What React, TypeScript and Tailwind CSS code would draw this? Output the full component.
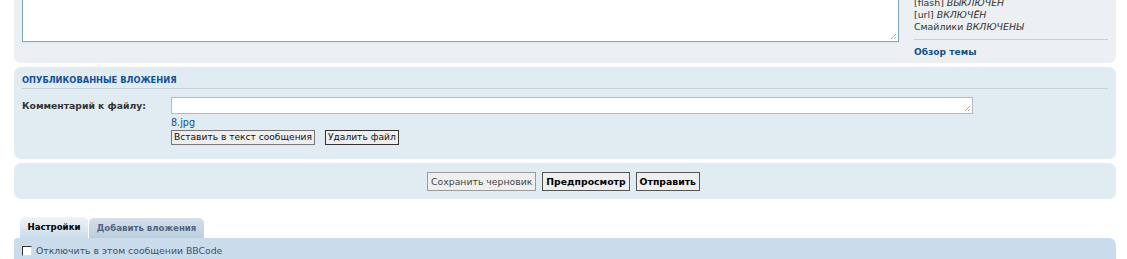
import React from "react";

export default function App() {
  return (
    <div className="w-[1127px] h-[259px] overflow-hidden bg-white font-['DejaVu_Sans',sans-serif] text-[10px] text-[#333333]">
      {/* top panel (cropped) */}
      <div className="ml-[14px] mr-[11px] -mt-[40px] h-[103px] rounded-[7px] bg-[#ECF0F3] px-[8px] pt-[10px] flex items-start">
        <div className="relative w-[877px] h-[72px] border border-[#7FA9C4] bg-white shadow-[0_1px_2px_#D4EAF6]">
          <svg className="absolute right-[1px] bottom-[1px]" width="8" height="8" viewBox="0 0 8 8">
            <path d="M7 2 L2 7 M7 5 L5 7" stroke="#A9A9A9" strokeWidth="1" />
          </svg>
        </div>
        <div className="ml-[15px] flex-1 mt-[3px] flex flex-col text-[9.4px]">
          <div className="leading-[12px] whitespace-nowrap">BBCode <i>ВКЛЮЧЁН</i></div>
          <div className="leading-[12px] whitespace-nowrap">[img] <i>ВКЛЮЧЕН</i></div>
          <div className="leading-[12px] whitespace-nowrap">[flash] <i>ВЫКЛЮЧЕН</i></div>
          <div className="leading-[12px] whitespace-nowrap">[url] <i>ВКЛЮЧЁН</i></div>
          <div className="leading-[12px] whitespace-nowrap pb-[6px] border-b border-[#CCCCCC]">Смайлики <i>ВКЛЮЧЕНЫ</i></div>
          <div className="leading-[12px] mt-[6px] font-bold text-[#105289] text-[9.1px]">Обзор темы</div>
        </div>
      </div>

      {/* attachments panel */}
      <div className="ml-[14px] mr-[11px] mt-[4px] h-[92px] rounded-[7px] bg-[#E1EBF2] px-[8px] pt-[8px]">
        <div className="text-[8.3px] leading-[11px] pb-[2px] font-bold uppercase text-[#115098] border-b border-[#C6D3DC]">
          Опубликованные вложения
        </div>
        <div className="flex mt-[8px]">
          <div className="w-[149px] pt-[2px] font-bold text-[#333333] leading-[13px] text-[9.25px]">Комментарий к файлу:</div>
          <div className="flex flex-col">
            <div className="relative w-[802px] h-[17px] border border-[#B4BAC0] bg-white">
              <svg className="absolute right-[1px] bottom-[1px]" width="8" height="8" viewBox="0 0 8 8">
                <path d="M7 2 L2 7 M7 5 L5 7" stroke="#A9A9A9" strokeWidth="1" />
              </svg>
            </div>
            <div className="mt-[3px] leading-[12px] text-[#105289] text-[9.6px]">8.jpg</div>
            <div className="flex gap-[10px] mt-[1px]">
              <button className="h-[15px] px-[2px] leading-[11px] border border-[#777777] bg-[#EEEEEE] text-[#111111] text-[9.1px]">
                Вставить в текст сообщения
              </button>
              <button className="h-[15px] px-[2px] leading-[11px] border border-[#333333] bg-[#EEEEEE] text-[#111111] text-[9.1px]">
                Удалить файл
              </button>
            </div>
          </div>
        </div>
      </div>

      {/* submit panel */}
      <div className="ml-[14px] mr-[11px] mt-[4px] h-[36px] rounded-[7px] bg-[#E1EBF2] flex items-center justify-center gap-[6px] pr-[3px]">
        <button className="h-[19px] px-[3px] border border-[#9A9A9A] bg-[#EFEFEF] text-[#444444] text-[9.3px] leading-[15px]">
          Сохранить черновик
        </button>
        <button className="h-[19px] px-[3px] border border-[#555555] bg-[#EFEFEF] text-black font-bold text-[9.3px] leading-[15px]">
          Предпросмотр
        </button>
        <button className="h-[19px] px-[3px] border border-[#555555] bg-[#EFEFEF] text-black font-bold text-[9.3px] leading-[15px]">
          Отправить
        </button>
      </div>

      {/* tabs */}
      <div className="mt-[18px] pl-[20px] flex items-end gap-[1px] h-[21px]">
        <div className="h-[21px] w-[68px] rounded-t-[5px] bg-gradient-to-b from-[#F0F4F7] to-[#CADCEB] flex items-center justify-center font-bold text-black text-[8.6px]">
          Настройки
        </div>
        <div className="h-[20px] w-[115px] rounded-t-[5px] bg-gradient-to-b from-[#D4E0EA] to-[#BBCEDD] flex items-center justify-center font-bold text-[#536482] text-[8.6px]">
          Добавить вложения
        </div>
      </div>
      <div className="ml-[14px] mr-[11px] h-[30px] rounded-tl-[4px] rounded-tr-[7px] bg-[#CADCEB] px-[8px] pt-[7px] flex items-start">
        <span className="mt-[1px] w-[10px] h-[10px] bg-white border border-[#333333] border-r-[#DDDDDD] border-b-[#DDDDDD]"></span>
        <span className="ml-[4px] leading-[12px] text-[#425067] text-[9.3px]">Отключить в этом сообщении BBCode</span>
      </div>
    </div>
  );
}
